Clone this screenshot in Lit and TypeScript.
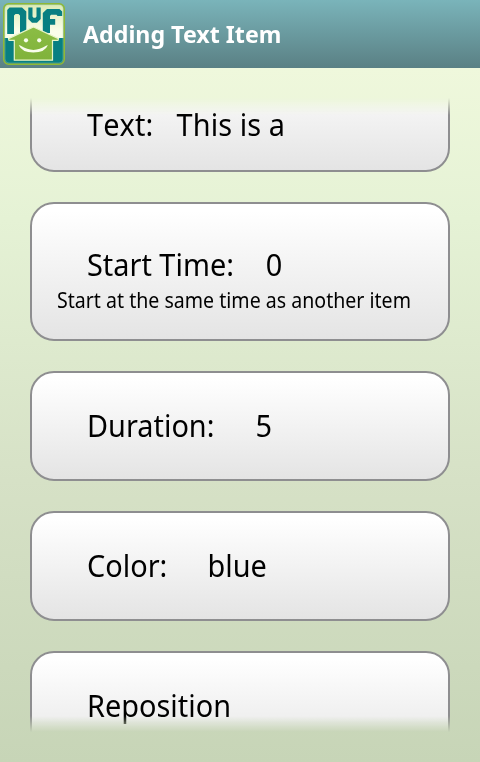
import { LitElement, html, css, nothing } from "lit";
import { customElement, property } from "lit/decorators.js";

@customElement("nuf-logo")
export class NufLogo extends LitElement {
  static styles = css`
    :host { display: block; width: 62px; height: 62px; }
    svg { display: block; }
  `;
  render() {
    return html`<svg width="62" height="62" viewBox="3 3 62 62">
      <defs>
        <linearGradient id="sky" x1="0" y1="0" x2="0" y2="1">
          <stop offset="0" stop-color="#dcebb4" />
          <stop offset="0.8" stop-color="#fafdea" />
        </linearGradient>
        <linearGradient id="house" x1="0" y1="0" x2="0" y2="1">
          <stop offset="0" stop-color="#8bbd45" />
          <stop offset="1" stop-color="#80b23a" />
        </linearGradient>
        <clipPath id="tile"><rect x="4.5" y="4.5" width="59" height="59" rx="4.5" /></clipPath>
      </defs>
      <g clip-path="url(#tile)">
        <rect x="4" y="4" width="60" height="34" fill="url(#sky)" />
        <rect x="4" y="38" width="60" height="26" fill="#087f82" />
        <g fill="#087f82">
          <path d="M7.200 10L9.500 7.500H22L26.300 11.500V36H20V15.500L18.500 14H15.500L14 15.500V34H7.200Z" />
          <path d="M28.300 7.500H32.500V16.500L33.500 17.800H35.500L36.500 16.500V7.500H40.700V19L37 22.800H32L28.300 19Z" />
          <path d="M42.800 13L47 9H59.500L62.200 11.500V16H57.500L56.500 14.800H51L50 16V19H55.200V24.800H50V33H42.800Z" />
        </g>
      </g>
      <path d="M33.500 27L58.500 38.600L58 40.300H52.500V60.200H14.300V40.300H9L8.500 38.600Z" fill="url(#house)" stroke="#e9f5c8" stroke-width="1.200" />
      <g fill="#f8fdeb">
        <circle cx="26" cy="40.300" r="2.100" /><circle cx="39.200" cy="40.300" r="2.100" />
        <path d="M18.800 45.300Q20 44.800 20.800 45.800Q33.500 54 46 45.800Q47 44.800 47.800 45.300Q45 52.600 33.300 52.600Q22 52.600 18.800 45.300Z" />
      </g>
      <rect x="5" y="5" width="58" height="58" rx="4" fill="none" stroke="#a8d8b8" stroke-opacity="0.350" stroke-width="1" />
      <rect x="3.750" y="3.750" width="60.500" height="60.500" rx="5" fill="none" stroke="#8fb935" stroke-width="1.500" />
    </svg>`;
  }
}

@customElement("setting-card")
export class SettingCard extends LitElement {
  @property() label = "";
  @property() value = "";
  @property() note = "";
  @property({ type: Number }) gap = 24;

  static styles = css`
    :host {
      display: flex; flex-direction: column; box-sizing: border-box; flex: none;
      height: 110px; padding: 30px 25px 0; border: 2px solid #8e8e90;
      border-radius: 24px; background: linear-gradient(#fff 5%, #e4e4e4);
    }
    :host([note]) { height: 139px; padding-top: 38px; }
    .row, .note { transform: scaleX(0.932); transform-origin: left; white-space: nowrap; }
    .row { display: flex; margin-left: 30px; font-size: 31px; line-height: 44px; }
    .note { font-size: 21px; line-height: 28px; }
  `;
  render() {
    return html`<div class="row" style="gap:${this.gap}px">
        <span>${this.label}</span>${this.value ? html`<span>${this.value}</span>` : nothing}
      </div>
      ${this.note ? html`<div class="note">${this.note}</div>` : nothing}`;
  }
}

@customElement("app-root")
export class AppRoot extends LitElement {
  static styles = css`
    :host {
      display: flex; flex-direction: column; height: 762px; overflow: hidden; color: #000;
      font-family: "Noto Sans", "Open Sans", sans-serif;
      background: linear-gradient(#eff8dc 68px, #e5f2d5 220px, #d6e1c6 480px, #c7d5b7);
    }
    header {
      display: flex; align-items: center; flex: none; height: 68px; box-sizing: border-box;
      padding-left: 3px; gap: 18px; background: linear-gradient(#7ab4ba, #5a8084);
    }
    h1 {
      margin: 0; color: #fff; font-size: 24px; line-height: 34px; font-weight: 700;
      white-space: nowrap; transform: scaleX(0.967); transform-origin: left;
    }
    main {
      display: flex; flex-direction: column; justify-content: flex-start; gap: 30px;
      height: 634px; margin: 30px 30px 0; overflow: hidden;
      mask-image: linear-gradient(transparent, #000 17px, #000 calc(100% - 16px), transparent);
    }
    .first { margin-top: -36px; padding-top: 38px; letter-spacing: 0.1px; font-kerning: none; }
  `;
  render() {
    return html`
      <header><nuf-logo></nuf-logo><h1>Adding Text Item</h1></header>
      <main>
        <setting-card class="first" label="Text:" value="This is a" .gap=${25}></setting-card>
        <setting-card label="Start Time:" value="0" note="Start at the same time as another item" .gap=${34}></setting-card>
        <setting-card label="Duration:" value="5" .gap=${44}></setting-card>
        <setting-card label="Color:" value="blue" .gap=${43}></setting-card>
        <setting-card label="Reposition"></setting-card>
      </main>`;
  }
}
